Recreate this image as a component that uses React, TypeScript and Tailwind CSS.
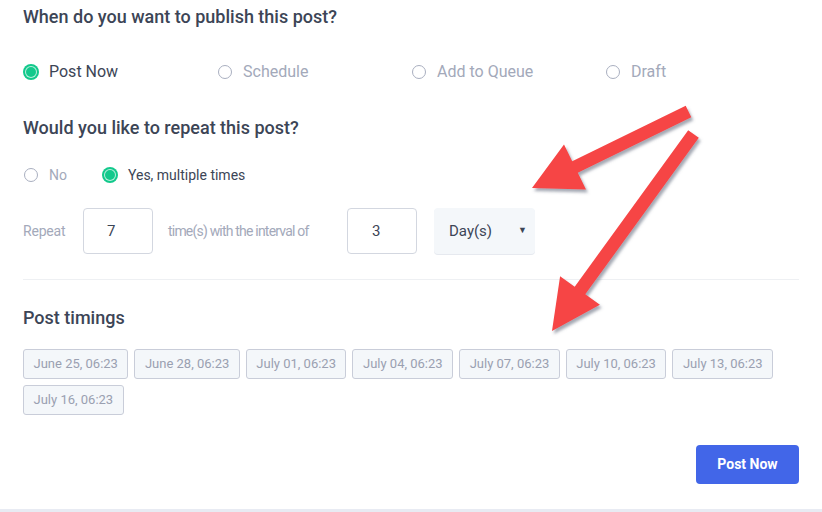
import React from "react"

const Radio = ({ checked }: { checked?: boolean }) =>
  checked ? (
    <span className="flex h-[14px] w-[14px] items-center justify-center rounded-full bg-[#13c98c] ring-1 ring-[#13c98c] ring-offset-0">
      <span className="h-[12px] w-[12px] rounded-full border border-white/70 bg-[#13c98c]" />
    </span>
  ) : (
    <span className="h-[14px] w-[14px] rounded-full border border-[#a9afc0] bg-white" />
  )

const timings = [
  "June 25, 06:23",
  "June 28, 06:23",
  "July 01, 06:23",
  "July 04, 06:23",
  "July 07, 06:23",
  "July 10, 06:23",
  "July 13, 06:23",
  "July 16, 06:23",
]

const publishOptions = ["Post Now", "Schedule", "Add to Queue", "Draft"]

const Arrows = () => (
  <svg className="pointer-events-none absolute left-0 top-0" width="822" height="512">
    <defs>
      <filter id="sh" x="-20%" y="-20%" width="140%" height="140%">
        <feDropShadow dx="2" dy="3" stdDeviation="1.5" floodColor="#5a6275" floodOpacity="0.55" />
      </filter>
    </defs>
    <g fill="#f64545" filter="url(#sh)">
      <polygon points="685.7,105.7 572.2,161.2 564,144.5 532,188 586,189.5 577.8,172.8 691.3,117.3" />
      <polygon points="688.2,130.2 574.7,286.7 560.1,276.2 552,331 599.9,304.8 585.3,294.3 698.8,137.8" />
    </g>
  </svg>
)

export default function App() {
  return (
    <div className="relative h-[512px] w-[822px] overflow-hidden bg-white font-['Roboto',sans-serif]">
      <div className="w-[799px] pl-[23px] pt-[5px]">
        <h2 className="text-[18px] font-medium leading-[24px] text-[#3c4556]">
          When do you want to publish this post?
        </h2>

        <div className="mt-[32px] flex h-[22px] items-center">
          {publishOptions.map((o, i) => (
            <div key={o} className="flex w-[194px] items-center gap-[11px] pl-px">
              <Radio checked={i === 0} />
              <span className={`text-[16px] ${i === 0 ? "text-[#3c4556]" : "text-[#a3a9ba]"}`}>{o}</span>
            </div>
          ))}
        </div>

        <h2 className="mt-[33px] text-[18px] font-medium leading-[24px] text-[#3c4556]">
          Would you like to repeat this post?
        </h2>

        <div className="mt-[25px] flex h-[20px] items-center pl-px text-[14px]">
          <div className="flex w-[79px] items-center gap-[11px]">
            <Radio />
            <span className="text-[#a3a9ba]">No</span>
          </div>
          <div className="flex items-center gap-[11px]">
            <Radio checked />
            <span className="text-[#3c4556]">Yes, multiple times</span>
          </div>
        </div>

        <div className="mt-[23px] flex h-[46px] items-center">
          <span className="w-[60px] text-[14px] tracking-[-0.2px] text-[#a3a9ba]">Repeat</span>
          <div className="flex h-[46px] w-[70px] items-center rounded-[4px] border border-[#d3d7e0] pl-[23px] text-[15px] text-[#3c4556]">
            7
          </div>
          <span className="ml-[15px] w-[179px] text-[14px] tracking-[-0.8px] text-[#a3a9ba]">
            time(s) with the interval of
          </span>
          <div className="flex h-[46px] w-[70px] items-center rounded-[4px] border border-[#d3d7e0] pl-[24px] text-[15px] text-[#3c4556]">
            3
          </div>
          <div className="ml-[17px] flex h-[46px] w-[101px] items-center justify-between rounded-[4px] bg-[#f4f7fa] pl-[15px] pr-[8px] text-[15px] text-[#3c4556] shadow-[0_1px_0_#e6e9ef]">
            <span>Day(s)</span>
            <span className="text-[9px]">▼</span>
          </div>
        </div>

        <div className="mt-[25px] h-px w-[776px] bg-[#eef0f3]" />

        <h2 className="mt-[26px] text-[18px] font-medium leading-[24px] text-[#3c4556]">Post timings</h2>

        <div className="mt-[19px] flex w-[776px] flex-wrap gap-x-[6px] gap-y-[6px]">
          {timings.map((t) => (
            <div
              key={t}
              className="flex h-[30px] items-center rounded-[3px] border border-[#c9cdd9] bg-[#f4f7fa] px-[9.5px] text-[13px] text-[#9aa0b1]"
            >
              {t}
            </div>
          ))}
        </div>

        <div className="mt-[30px] flex w-[776px] justify-end">
          <button className="h-[39px] w-[103px] rounded-[4px] bg-[#4266e8] text-[14px] font-bold text-white">
            Post Now
          </button>
        </div>
      </div>
      <div className="absolute bottom-0 left-0 h-[3px] w-[822px] bg-[#e8ebf3]" />
      <Arrows />
    </div>
  )
}
